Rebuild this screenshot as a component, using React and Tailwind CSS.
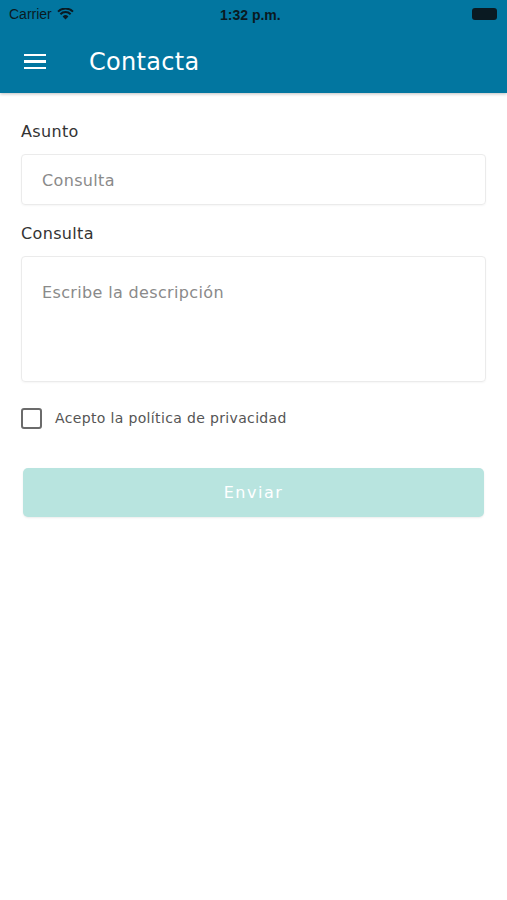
import React from "react";

export default function App() {
  return (
    <div className="w-[507px] h-[900px] bg-white" style={{ fontFamily: '"DejaVu Sans", Verdana, sans-serif' }}>
      <div className="bg-[#0276a0] h-[93px] shadow-[0_1px_3px_rgba(0,0,0,0.25)] relative">
        <div className="h-[28px] flex items-center justify-between px-[9px] text-[#0a1a22]" style={{ fontFamily: '"Liberation Sans", Arial, sans-serif' }}>
          <div className="flex items-center gap-[5px] text-[14px]">
            <span>Carrier</span>
            <svg width="17" height="12" viewBox="0 0 17 12">
              <path d="M8.5 11.5 L5.6 8.4 A4.2 4.2 0 0 1 11.4 8.4 Z" fill="#0a1a22" />
              <path d="M3.4 6.2 A7.3 7.3 0 0 1 13.6 6.2" stroke="#0a1a22" strokeWidth="2" fill="none" />
              <path d="M1 3.6 A10.8 10.8 0 0 1 16 3.6" stroke="#0a1a22" strokeWidth="2" fill="none" />
            </svg>
          </div>
          <div className="text-[14px] font-bold absolute left-[220px] top-[5px]">1:32 p.m.</div>
          <div className="w-[25px] h-[12px] rounded-[3px] bg-[#0a1a22] mr-[1px]" />
        </div>
        <div className="flex items-center h-[65px] pt-[2px]">
          <div className="w-[89px] pl-[24px] flex flex-col gap-[4px]">
            <div className="w-[22px] h-[2.5px] bg-white" />
            <div className="w-[22px] h-[2.5px] bg-white" />
            <div className="w-[22px] h-[2.5px] bg-white" />
          </div>
          <div className="text-white text-[24px] leading-none tracking-[0.3px]">Contacta</div>
        </div>
      </div>

      <div className="px-[21px] pt-[29px] flex flex-col tracking-[0.35px]">
        <div className="text-[16px] text-[#333] leading-[20px]">Asunto</div>
        <div className="mt-[12px] h-[51px] border border-[#ebebeb] rounded-[4px] shadow-[0_1px_2px_rgba(0,0,0,0.04)] flex items-center px-[20px] pt-[2px] text-[16px] text-[#8a8a8a]">
          Consulta
        </div>
        <div className="mt-[19px] text-[16px] text-[#333] leading-[20px]">Consulta</div>
        <div className="mt-[12px] h-[126px] border border-[#ebebeb] rounded-[4px] shadow-[0_1px_2px_rgba(0,0,0,0.04)] px-[20px] pt-[26px] text-[16px] text-[#8a8a8a] leading-[20px]">
          Escribe la descripción
        </div>
        <div className="mt-[26px] flex items-center">
          <div className="w-[21px] h-[21px] border-2 border-[#6b6b6b] rounded-[3px]" />
          <div className="ml-[13px] text-[14px] text-[#555]">Acepto la política de privacidad</div>
        </div>
        <div className="mt-[39px] mx-[2px] h-[49px] rounded-[5px] bg-[#b8e4df] shadow-[0_1px_2px_rgba(0,0,0,0.08)] flex items-center justify-center text-white text-[16px] tracking-[1.5px]">
          Enviar
        </div>
      </div>
    </div>
  );
}
